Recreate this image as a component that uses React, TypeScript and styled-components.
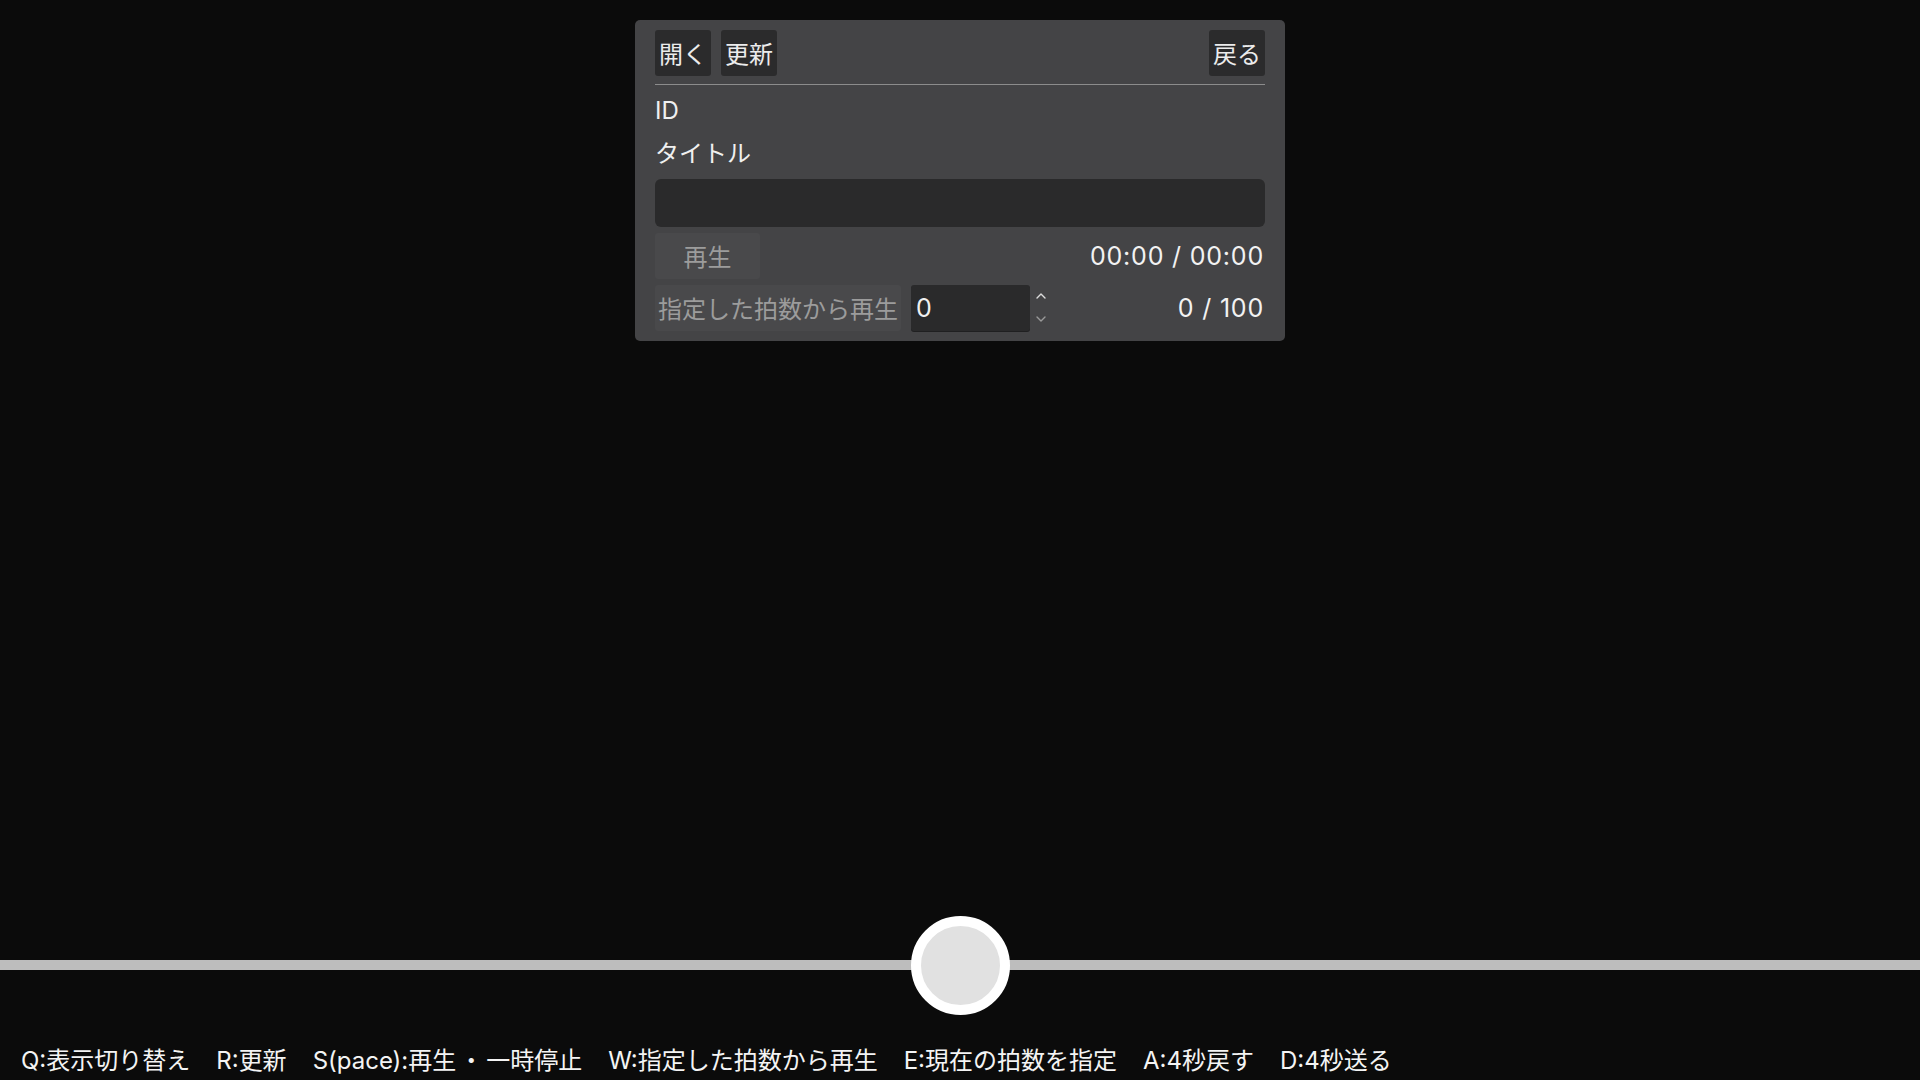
import React from "react";
import styled, { createGlobalStyle } from "styled-components";

const Global = createGlobalStyle`
  html, body { margin: 0; padding: 0; background: #0b0b0b; }
  body {
    font-family: Inter, "Noto Sans CJK JP", sans-serif;
    color: #ececec;
  }
  * { box-sizing: border-box; }
`;

const Page = styled.div`
  width: 100vw;
  height: 100vh;
  display: flex;
  flex-direction: column;
  overflow: hidden;
`;

const Main = styled.div`
  flex: 1;
  display: flex;
  justify-content: center;
  align-items: flex-start;
  padding-top: 20px;
`;

const Panel = styled.section`
  width: 650px;
  background: #444446;
  border-radius: 5px;
  padding: 10px 20px 10px;
  display: flex;
  flex-direction: column;
`;

const Header = styled.div`
  display: flex;
  gap: 10px;
  padding-bottom: 8px;
  border-bottom: 1px solid #8c8c8c;
`;

const Spacer = styled.div`
  flex: 1;
`;

const TopButton = styled.button`
  height: 46px;
  padding: 0 4px;
  border: none;
  border-radius: 3px;
  background: #2b2b2c;
  color: #ececec;
  font-family: "Noto Sans CJK JP", "Noto Sans", sans-serif;
  font-size: 24px;
  line-height: 44px;
  cursor: pointer;
`;

const InfoLine = styled.div<{ $mt: number }>`
  margin-top: ${(p) => p.$mt}px;
  height: 40px;
  line-height: 40px;
  font-size: 24px;
  font-family: Inter, "Noto Sans CJK JP", sans-serif;
  color: #f0f0f0;
`;

const Seek = styled.div`
  margin-top: 5px;
  height: 48px;
  border-radius: 6px;
  background: #2a2a2b;
`;

const Row = styled.div<{ $mt: number }>`
  margin-top: ${(p) => p.$mt}px;
  display: flex;
  align-items: center;
  gap: 10px;
`;

const DimButton = styled.button<{ $w?: number }>`
  height: 46px;
  width: ${(p) => (p.$w ? `${p.$w}px` : "auto")};
  padding: 0 3px;
  border: none;
  border-radius: 3px;
  background: #49494b;
  color: #9c9c9c;
  font-family: "Noto Sans CJK JP", "Noto Sans", sans-serif;
  font-size: 24px;
  line-height: 44px;
  white-space: nowrap;
`;

const Readout = styled.div`
  margin-left: auto;
  font-size: 25px;
  font-family: Inter, "Noto Sans CJK JP", sans-serif;
  color: #f2f2f2;
  letter-spacing: 0.8px;
  padding-right: 1px;
`;

const NumberBox = styled.div`
  width: 119px;
  height: 46px;
  background: #2a2a2b;
  border-radius: 3px;
  box-shadow: 0 1px 0 #202021;
  display: flex;
  align-items: center;
  padding-left: 5px;
  font-family: Inter, sans-serif;
  font-size: 25px;
  color: #f0f0f0;
`;

const Spin = styled.div`
  display: flex;
  flex-direction: column;
  gap: 17px;
  margin-left: -4px;
  margin-top: -2px;
`;

const SliderArea = styled.div`
  position: relative;
  height: 100px;
  display: flex;
  justify-content: center;
  align-items: center;
  &::before {
    content: "";
    position: absolute;
    left: 0;
    right: 0;
    top: 45px;
    height: 10px;
    background: #bdbdbd;
  }
`;

const Thumb = styled.div`
  position: relative;
  width: 99px;
  height: 99px;
  border-radius: 50%;
  background: #e1e1e1;
  border: 10px solid #ffffff;
`;

const Footer = styled.div`
  height: 65px;
  padding: 22px 0 0 21px;
  display: flex;
  align-items: center;
  gap: 26px;
  font-family: Inter, "Noto Sans CJK JP", sans-serif;
  font-size: 24px;
  color: #f4f4f4;
  white-space: nowrap;
`;

const Shortcut = styled.span``;

const Dot = styled.span`
  margin: 0 3px;
`;

const Chevron = ({ up, color }: { up?: boolean; color: string }) => (
  <svg width="10" height="6" viewBox="0 0 10 6">
    <path
      d={up ? "M1 5 L5 1 L9 5" : "M1 1 L5 5 L9 1"}
      fill="none"
      stroke={color}
      strokeWidth="1.4"
      strokeLinecap="round"
      strokeLinejoin="round"
    />
  </svg>
);

const shortcuts: React.ReactNode[] = [
  "Q:表示切り替え",
  "R:更新",
  <>
    S(pace):再生<Dot>・</Dot>一時停止
  </>,
  "W:指定した拍数から再生",
  "E:現在の拍数を指定",
  "A:4秒戻す",
  "D:4秒送る",
];

export default function App() {
  return (
    <Page>
      <Global />
      <Main>
        <Panel>
          <Header>
            <TopButton>開く</TopButton>
            <TopButton>更新</TopButton>
            <Spacer />
            <TopButton>戻る</TopButton>
          </Header>
          <InfoLine $mt={6}>ID</InfoLine>
          <InfoLine $mt={3}>タイトル</InfoLine>
          <Seek />
          <Row $mt={6}>
            <DimButton $w={105}>再生</DimButton>
            <Readout>00:00 / 00:00</Readout>
          </Row>
          <Row $mt={6}>
            <DimButton>指定した拍数から再生</DimButton>
            <NumberBox>0</NumberBox>
            <Spin>
              <Chevron up color="#dcdcdc" />
              <Chevron color="#9a9a9a" />
            </Spin>
            <Readout>0 / 100</Readout>
          </Row>
        </Panel>
      </Main>
      <SliderArea>
        <Thumb />
      </SliderArea>
      <Footer>
        {shortcuts.map((s, i) => (
          <Shortcut key={i}>{s}</Shortcut>
        ))}
      </Footer>
    </Page>
  );
}
